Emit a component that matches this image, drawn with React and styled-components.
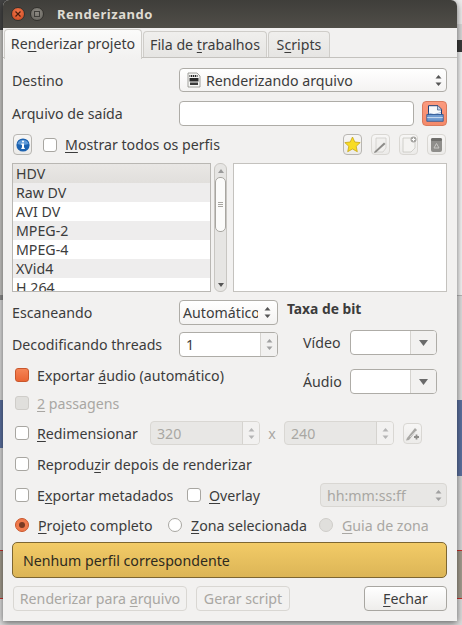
import React from "react";
import styled, { createGlobalStyle } from "styled-components";

const GlobalStyle = createGlobalStyle`
  html, body { margin: 0; padding: 0; }
  body { font-family: "Noto Sans", "Open Sans", sans-serif; font-size: 14.2px; color: #3c3c3c; }
`;

const Desktop = styled.div`
  width: 462px;
  height: 625px;
  overflow: hidden;
  background:
    linear-gradient(#ececec 0 24px, #d8d8d8 24px 40px, #3a3a3a 40px 52px, #f4f4f4 52px 295px, #b8b8b8 295px 296px, #dedede 296px 400px, #5c719f 400px 476px, #d6d6d6 476px 550px, #c9302c 550px 551px, #a39c8e 551px 598px, #c9302c 598px 599px, #dcdcdc 599px) right / 50% 100% no-repeat,
    linear-gradient(#444 0 30px, #c6c5c2 30px 295px, #8c8c8c 295px 300px, #dadada 300px 400px, #5c719f 400px 448px, #d6d6d6 448px 550px, #c9302c 550px 551px, #a39c8e 551px 598px, #c9302c 598px 599px, #dcdcdc 599px) left / 50% 100% no-repeat;
`;
const Window = styled.div`
  margin-left: 3px;
  width: 454px;
  height: 621px;
  display: flex;
  flex-direction: column;
  background: #f2f1f0;
  border-radius: 6px 6px 0 0;
  box-shadow: 0 2px 7px rgba(0, 0, 0, 0.55);
  overflow: hidden;
`;
const TitleBar = styled.div`
  height: 28px;
  flex-shrink: 0;
  display: flex;
  align-items: center;
  padding-left: 8px;
  background: linear-gradient(#3f3e3a, #504e48);
`;
const TitleText = styled.div`
  margin-left: 8px;
  font-weight: 700;
  font-size: 13px;
  letter-spacing: 0.55px;
  color: #dfdbd2;
`;
const WindowDot = styled.div`
  width: 14px;
  height: 14px;
  margin-right: 5px;
  border-radius: 50%;
  display: flex;
  align-items: center;
  justify-content: center;
  background: ${(p) => (p.$close ? "radial-gradient(circle at 50% 35%, #f5794d, #c9431c)" : "radial-gradient(circle at 50% 35%, #8d8a83, #64625c)")};
  border: 1px solid #33322e;
  box-sizing: border-box;
`;
const TabBar = styled.div`
  display: flex;
  flex-shrink: 0;
  height: 30px;
  padding-left: 1px;
  box-sizing: border-box;
  border-bottom: 1px solid #c4c2be;
`;
const Tab = styled.div`
  width: ${(p) => p.$w}px;
  height: ${(p) => (p.$active ? 30 : 26)}px;
  margin-top: ${(p) => (p.$active ? 1 : 3)}px;
  padding-bottom: ${(p) => (p.$active ? 3 : 1)}px;
  box-sizing: border-box;
  display: flex;
  align-items: center;
  justify-content: center;
  white-space: nowrap;
  border: 1px solid #cfcdc9;
  border-bottom: none;
  border-radius: 4px 4px 0 0;
  margin-right: 1px;
  position: relative;
  z-index: ${(p) => (p.$active ? 1 : 0)};
  background: ${(p) => (p.$active ? "linear-gradient(#fbfbfa, #f2f1f0)" : "linear-gradient(#f0efed, #e6e5e3)")};
`;
const Content = styled.div`
  flex: 1;
  display: flex;
  flex-direction: column;
  padding: 10px 10px 0 9px;
`;
const U = styled.span`
  text-decoration: underline;
  text-underline-offset: 2px;
  text-decoration-thickness: 1px;
`;
const Row = styled.div`
  display: flex;
  align-items: center;
  flex-shrink: 0;
  height: ${(p) => p.$h}px;
  margin-top: ${(p) => p.$mt || 0}px;
`;
const FieldLabel = styled.div`
  width: ${(p) => p.$w || 167}px;
  flex-shrink: 0;
  white-space: nowrap;
`;
const Field = styled.div`
  height: 100%;
  box-sizing: border-box;
  width: ${(p) => (p.$w ? `${p.$w}px` : "auto")};
  flex: ${(p) => (p.$w ? "none" : 1)};
  margin-left: ${(p) => p.$ml || 0};
  display: flex;
  align-items: center;
  overflow: hidden;
  white-space: nowrap;
  border: 1px solid ${(p) => (p.$off ? "#d9d7d3" : "#aeaca7")};
  border-radius: 4px;
  color: ${(p) => (p.$off ? "#a9a7a3" : "#3c3c3c")};
  background: ${(p) => (p.$off ? "#e8e7e5" : p.$flat ? "#fff" : "linear-gradient(#fff, #f4f3f2)")};
`;
const FieldText = styled.div`
  flex: 1;
  overflow: hidden;
  padding-left: ${(p) => p.$pl || 6}px;
  display: flex;
  align-items: center;
  gap: 5px;
`;
const SpinSide = styled.div`
  width: ${(p) => p.$w || 16}px;
  height: 100%;
  flex-shrink: 0;
  display: flex;
  align-items: center;
  justify-content: center;
  border-left: ${(p) => (p.$split ? "1px solid #d5d3cf" : "none")};
  background: ${(p) => (p.$split ? "#f2f1f0" : "transparent")};
`;
const IconButton = styled.div`
  width: ${(p) => p.$w || 19}px;
  height: ${(p) => p.$h || 21}px;
  flex-shrink: 0;
  box-sizing: border-box;
  display: flex;
  align-items: center;
  justify-content: center;
  margin-left: ${(p) => p.$ml || 0}px;
  border: 1px solid ${(p) => (p.$off ? "#d9d7d3" : p.$hot ? "#d97a5c" : "#b8b6b2")};
  border-radius: 4px;
  background: ${(p) => (p.$hot ? "linear-gradient(#fb9a7e, #f58a6a)" : "linear-gradient(#f7f6f5, #ecebe9)")};
`;
const IconGroup = styled.div`
  margin-left: auto;
  margin-right: 1px;
  display: flex;
  gap: 9px;
`;
const CheckBox = styled.div`
  width: 14px;
  height: 14px;
  flex-shrink: 0;
  box-sizing: border-box;
  margin-left: ${(p) => p.$ml ?? 3}px;
  border: 1px solid ${(p) => (p.$on ? "#c9572c" : p.$off ? "#cfcdc9" : "#a8a6a1")};
  border-radius: 3px;
  background: ${(p) => (p.$on ? "linear-gradient(#f58456, #ea6534)" : p.$off ? "#e0dfdc" : "#fff")};
`;
const RadioDot = styled.div`
  width: 14px;
  height: 14px;
  flex-shrink: 0;
  box-sizing: border-box;
  margin-left: ${(p) => p.$ml ?? 3}px;
  border-radius: 50%;
  display: flex;
  align-items: center;
  justify-content: center;
  border: 1px solid ${(p) => (p.$on ? "#c9572c" : p.$off ? "#cfcdc9" : "#a8a6a1")};
  background: ${(p) => (p.$on ? "#f07a4c" : p.$off ? "#e0dfdc" : "#fff")};
  &::after {
    content: "";
    display: ${(p) => (p.$on ? "block" : "none")};
    width: 6px;
    height: 6px;
    border-radius: 50%;
    background: #7a3a22;
  }
`;
const OptionItem = styled.div`
  display: flex;
  align-items: center;
  flex-shrink: 0;
  width: ${(p) => (p.$w ? `${p.$w}px` : "auto")};
  gap: ${(p) => p.$gap || 8}px;
  white-space: nowrap;
  color: ${(p) => (p.$off ? "#a9a7a3" : "#3c3c3c")};
`;
const ListArea = styled.div`
  display: flex;
  flex-shrink: 0;
  height: 129px;
  margin-top: 8px;
`;
const ProfileList = styled.div`
  width: 199px;
  box-sizing: border-box;
  border: 1px solid #b9b7b3;
  background: #fff;
  overflow: hidden;
`;
const ProfileItem = styled.div`
  height: 19px;
  line-height: 19px;
  padding-left: 3px;
  background: ${(p) => (p.$selected ? "linear-gradient(#e9e7e5, #e1dfdc)" : p.$odd ? "#eeeded" : "#fff")};
`;
const ScrollTrack = styled.div`
  width: 13px;
  margin-left: 3px;
  box-sizing: border-box;
  display: flex;
  flex-direction: column;
  align-items: center;
  border: 1px solid #c8c6c2;
  border-radius: 6px;
  background: #e6e5e3;
`;
const ScrollEnd = styled.div`
  height: 13px;
  flex-shrink: 0;
  display: flex;
  align-items: center;
  justify-content: center;
`;
const ScrollThumb = styled.div`
  width: 11px;
  height: 55px;
  flex-shrink: 0;
  box-sizing: border-box;
  border: 1px solid #a8a6a1;
  border-radius: 5px;
  background: #fbfbfa;
  display: flex;
  flex-direction: column;
  align-items: center;
  justify-content: center;
  gap: 1px;
  & i { display: block; width: 5px; height: 1px; background: #a8a6a1; }
`;
const ScrollGap = styled.div`
  flex: 1;
`;
const PreviewBox = styled.div`
  flex: 1;
  margin-left: 6px;
  border: 1px solid #c4c2be;
  background: #fff;
`;
const BitGrid = styled.div`
  display: grid;
  grid-template-columns: 266px 1fr;
  flex-shrink: 0;
  height: 94px;
  margin-top: 8px;
`;
const Column = styled.div`
  display: flex;
  flex-direction: column;
  padding-left: ${(p) => p.$pl || 0}px;
`;
const BitTitle = styled.div`
  height: 18px;
  line-height: 18px;
  font-weight: 700;
  font-size: 13.8px;
`;
const BitLabel = styled.div`
  width: 47px;
  margin-left: 16px;
  flex-shrink: 0;
`;
const TimesMark = styled.div`
  width: 24px;
  text-align: center;
  color: #a9a7a3;
  flex-shrink: 0;
`;
const StatusBar = styled.div`
  height: 36px;
  margin-top: 8px;
  flex-shrink: 0;
  box-sizing: border-box;
  display: flex;
  align-items: center;
  padding-left: 10px;
  border: 1px solid #7d6632;
  border-radius: 5px;
  color: #2e2a1e;
  background: linear-gradient(#f2cb67, #dcb556);
`;
const PushButton = styled.div`
  width: ${(p) => p.$w}px;
  height: 25px;
  box-sizing: border-box;
  flex-shrink: 0;
  display: flex;
  align-items: center;
  justify-content: center;
  white-space: nowrap;
  margin-left: ${(p) => p.$ml || 0};
  border: 1px solid ${(p) => (p.$off ? "#d9d7d3" : "#a8a6a1")};
  border-radius: 4px;
  color: ${(p) => (p.$off ? "#a9a7a3" : "#3c3c3c")};
  background: ${(p) => (p.$off ? "#f2f1f0" : "linear-gradient(#fff, #eeedeb)")};
`;

const UpDown = ({ color = "#555" }) => (
  <svg width="7" height="15" viewBox="0 0 7 15">
    <path d="M3.5 2 6.5 5.5H.5z" fill={color} />
    <path d="M3.5 13 .5 9.5h6z" fill={color} />
  </svg>
);
const Caret = () => (
  <svg width="9" height="6" viewBox="0 0 9 6">
    <path d="M0 0h9L4.5 6z" fill="#6a6a6a" />
  </svg>
);
const InfoIcon = () => (
  <svg width="14" height="14" viewBox="0 0 14 14">
    <circle cx="7" cy="7" r="6.6" fill="#1c62b0" />
    <path d="M1.5 6a5.6 5 0 0 1 11 0 8 3 0 0 1-11 0z" fill="#5f9ad8" />
    <rect x="6" y="2.6" width="2" height="2" rx="1" fill="#fff" />
    <path d="M5.3 5.6H8v4.2h.8v1.2H5.3V9.8H6V6.8h-.7z" fill="#fff" />
  </svg>
);
const ClapperIcon = () => (
  <svg width="14" height="16" viewBox="0 0 14 16">
    <path d="M1 1h9l3 3v11H1z" fill="#f7f7f5" stroke="#8a8a86" strokeWidth="0.8" />
    <rect x="2.5" y="3" width="8" height="2" fill="#2b2b2b" />
    <rect x="2.5" y="6" width="9" height="3.5" fill="#2b2b2b" />
    <path d="M3.5 3v2M5.5 3v2M7.5 3v2M9.5 3v2" stroke="#eee" strokeWidth="0.7" />
    <rect x="3" y="10.5" width="8" height="2.5" fill="#3a3a3a" />
  </svg>
);
const SaveFileIcon = () => (
  <svg width="18" height="17" viewBox="0 0 18 17">
    <path d="M2.5 10V.7h9.5l3.5 3.5V10z" fill="#f7f8fa" stroke="#1f3f75" strokeWidth="1" />
    <path d="M11.5 1v4h4" fill="#c3cde0" stroke="#1f3f75" strokeWidth="0.6" />
    <path d="M2.5 8 8 9.5l7-2" fill="none" stroke="#8fa8cf" strokeWidth="0.8" />
    <path d="M.8 9.5h16.4v6.8H.8z" fill="#6f9ad0" stroke="#2c5490" strokeWidth="0.8" />
    <path d="M1.2 12.6h15.6" stroke="#cddcf0" strokeWidth="1" />
  </svg>
);
const StarIcon = () => (
  <svg width="17" height="17" viewBox="0 0 17 17">
    <path d="M8.5 1 10.8 6l5.4.6-4 3.7 1.1 5.4-4.8-2.7-4.8 2.7 1.1-5.4-4-3.7L6.2 6z" fill="#f8dc24" stroke="#c8a718" strokeWidth="0.8" strokeLinejoin="round" />
  </svg>
);
const PencilIcon = () => (
  <svg width="15" height="16" viewBox="0 0 15 16">
    <path d="M3 1h10v10l-3 4H3z" fill="#f1f0ee" stroke="#cfcdc9" strokeWidth="0.8" />
    <path d="M1.5 14.5 11 5.5l1.5 1.5L3 15.5l-2 .5z" fill="#8d8c89" />
  </svg>
);
const NewDocIcon = () => (
  <svg width="16" height="17" viewBox="0 0 16 17">
    <path d="M2 2h9v2h3v8l-4 4H2z" fill="#f4f3f1" stroke="#c8c6c2" strokeWidth="0.8" />
    <circle cx="12.5" cy="3.5" r="3" fill="#a5a4a1" />
    <path d="M12.5 1.8v3.4M10.8 3.5h3.4" stroke="#fff" strokeWidth="1" />
  </svg>
);
const TrashIcon = () => (
  <svg width="13" height="16" viewBox="0 0 13 16">
    <rect x="1" y="1" width="11" height="14" rx="2" fill="#8f8e8b" />
    <rect x="1" y="1" width="11" height="3" rx="1.5" fill="#6f6e6b" />
    <path d="M6.5 6.5 9 11H4z" fill="none" stroke="#c9c8c5" strokeWidth="1" />
  </svg>
);
const ProfileEditIcon = () => (
  <svg width="15" height="16" viewBox="0 0 15 16">
    <path d="M2 13 10 3l2 2-8 10-3 .5z" fill="#a9a8a5" />
    <path d="M5 12 11 6" stroke="#dddcd9" strokeWidth="0.8" />
    <path d="M11.5 9.5v5M9 12h5" stroke="#8f8e8b" strokeWidth="1.8" />
  </svg>
);

const profiles = ["HDV", "Raw DV", "AVI DV", "MPEG-2", "MPEG-4", "XVid4", "H.264"];

const App = () => {
  return (
    <>
      <GlobalStyle />
      <Desktop>
        <Window>
          <TitleBar>
            <WindowDot $close>
              <svg width="6" height="6" viewBox="0 0 6 6">
                <path d="M.5.5l5 5M5.5.5l-5 5" stroke="#4a1c0c" strokeWidth="1.2" />
              </svg>
            </WindowDot>
            <WindowDot>
              <svg width="6" height="6" viewBox="0 0 6 6">
                <rect x=".5" y=".5" width="5" height="5" fill="none" stroke="#3f3e3a" />
              </svg>
            </WindowDot>
            <TitleText>Renderizando</TitleText>
          </TitleBar>
          <TabBar>
            <Tab $active $w={138}><span>Re<U>n</U>derizar projeto</span></Tab>
            <Tab $w={124}><span>Fila de <U>t</U>rabalhos</span></Tab>
            <Tab $w={62}><span>S<U>c</U>ripts</span></Tab>
          </TabBar>
          <Content>
            <Row $h={24}>
              <FieldLabel>Destino</FieldLabel>
              <Field>
                <FieldText $pl={7}>
                  <ClapperIcon />
                  Renderizando arquivo
                </FieldText>
                <SpinSide><UpDown /></SpinSide>
              </Field>
            </Row>
            <Row $h={25} $mt={9}>
              <FieldLabel>Arquivo de saída</FieldLabel>
              <Field $flat />
              <IconButton $hot $w={25} $h={25} $ml={8}><SaveFileIcon /></IconButton>
            </Row>
            <Row $h={21} $mt={8}>
              <IconButton $ml={1}><InfoIcon /></IconButton>
              <OptionItem $gap={8}>
                <CheckBox $ml={11} />
                <span><U>M</U>ostrar todos os perfis</span>
              </OptionItem>
              <IconGroup>
                <IconButton><StarIcon /></IconButton>
                <IconButton $off><PencilIcon /></IconButton>
                <IconButton $off><NewDocIcon /></IconButton>
                <IconButton $off><TrashIcon /></IconButton>
              </IconGroup>
            </Row>
            <ListArea>
              <ProfileList>
                {profiles.map((name, i) => (
                  <ProfileItem key={name} $selected={i === 0} $odd={i % 2 === 1 || i === 0}>{name}</ProfileItem>
                ))}
              </ProfileList>
              <ScrollTrack>
                <ScrollEnd>
                  <svg width="6" height="4" viewBox="0 0 6 4"><path d="M3 0l3 4H0z" fill="#9a9a9a" /></svg>
                </ScrollEnd>
                <ScrollThumb><i /><i /><i /></ScrollThumb>
                <ScrollGap />
                <ScrollEnd>
                  <svg width="6" height="4" viewBox="0 0 6 4"><path d="M0 0h6L3 4z" fill="#555" /></svg>
                </ScrollEnd>
              </ScrollTrack>
              <PreviewBox />
            </ListArea>
            <BitGrid>
              <Column>
                <Row $h={25}>
                  <FieldLabel>Escaneando</FieldLabel>
                  <Field>
                    <FieldText $pl={3}>Automático</FieldText>
                    <SpinSide $w={19}><UpDown /></SpinSide>
                  </Field>
                </Row>
                <Row $h={25} $mt={7}>
                  <FieldLabel>Decodificando threads</FieldLabel>
                  <Field $flat>
                    <FieldText>1</FieldText>
                    <SpinSide $split><UpDown color="#a0a0a0" /></SpinSide>
                  </Field>
                </Row>
                <Row $h={18} $mt={9}>
                  <OptionItem>
                    <CheckBox $on />
                    <span>Exportar <U>á</U>udio (automático)</span>
                  </OptionItem>
                </Row>
              </Column>
              <Column $pl={9}>
                <BitTitle>Taxa de bit</BitTitle>
                <Row $h={25} $mt={12}>
                  <BitLabel>Vídeo</BitLabel>
                  <Field $w={87} $flat>
                    <FieldText />
                    <SpinSide $split $w={25}><Caret /></SpinSide>
                  </Field>
                </Row>
                <Row $h={25} $mt={14}>
                  <BitLabel>Áudio</BitLabel>
                  <Field $w={87} $flat>
                    <FieldText />
                    <SpinSide $split $w={25}><Caret /></SpinSide>
                  </Field>
                </Row>
              </Column>
            </BitGrid>
            <Row $h={18}>
              <OptionItem $off>
                <CheckBox $off />
                <span><U>2</U> passagens</span>
              </OptionItem>
            </Row>
            <Row $h={24} $mt={9}>
              <OptionItem $w={138}>
                <CheckBox />
                <span><U>R</U>edimensionar</span>
              </OptionItem>
              <Field $w={110} $off>
                <FieldText>320</FieldText>
                <SpinSide $split><UpDown color="#b5b5b5" /></SpinSide>
              </Field>
              <TimesMark>x</TimesMark>
              <Field $w={110} $off>
                <FieldText>240</FieldText>
                <SpinSide $split><UpDown color="#b5b5b5" /></SpinSide>
              </Field>
              <IconButton $off $ml={9}><ProfileEditIcon /></IconButton>
            </Row>
            <Row $h={18} $mt={10}>
              <OptionItem>
                <CheckBox />
                <span>Reprodu<U>z</U>ir depois de renderizar</span>
              </OptionItem>
            </Row>
            <Row $h={24} $mt={10}>
              <OptionItem $w={175}>
                <CheckBox />
                <span>E<U>x</U>portar metadados</span>
              </OptionItem>
              <OptionItem>
                <CheckBox $ml={0} />
                <span><U>O</U>verlay</span>
              </OptionItem>
              <Field $w={127} $off $ml="auto">
                <FieldText>hh:mm:ss:ff</FieldText>
                <SpinSide><UpDown color="#a0a0a0" /></SpinSide>
              </Field>
            </Row>
            <Row $h={18} $mt={9}>
              <OptionItem $w={156} $gap={9}>
                <RadioDot $on />
                <span><U>P</U>rojeto completo</span>
              </OptionItem>
              <OptionItem $w={151} $gap={9}>
                <RadioDot $ml={0} />
                <span><U>Z</U>ona selecionada</span>
              </OptionItem>
              <OptionItem $off $gap={9}>
                <RadioDot $ml={0} $off />
                <span><U>G</U>uia de zona</span>
              </OptionItem>
            </Row>
            <StatusBar>Nenhum perfil correspondente</StatusBar>
            <Row $h={25} $mt={8}>
              <PushButton $w={174} $off $ml="1px"><span>Renderizar para <U>a</U>rquivo</span></PushButton>
              <PushButton $w={94} $off $ml="9px">Gerar script</PushButton>
              <PushButton $w={83} $ml="auto"><span><U>F</U>echar</span></PushButton>
            </Row>
          </Content>
        </Window>
      </Desktop>
    </>
  );
};

export default App;
